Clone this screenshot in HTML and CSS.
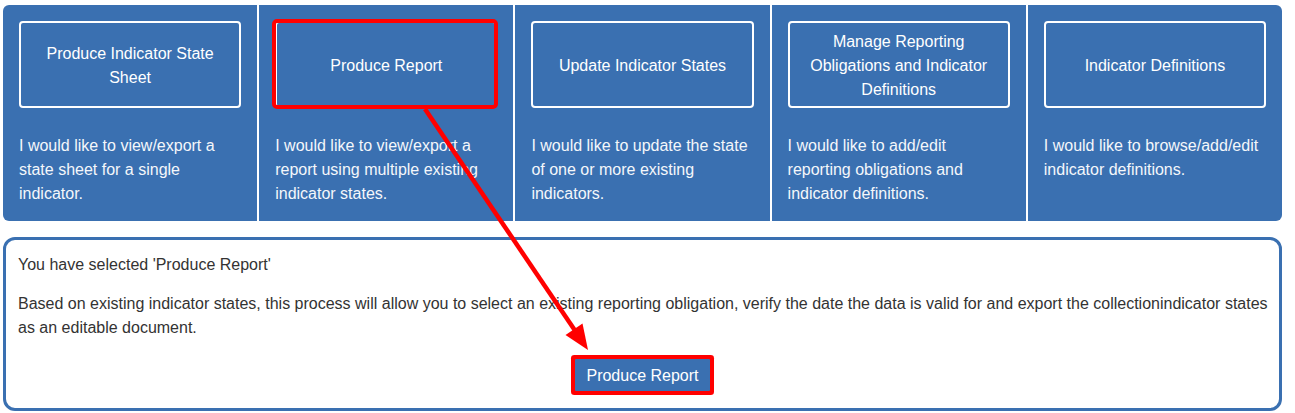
FILE: index.html
```html
<!DOCTYPE html>
<html lang="en">
<head>
<meta charset="utf-8">
<title>Processes</title>
<link rel="stylesheet" href="styles.css">
</head>
<body>
<div class="page">
  <div class="tiles">
    <div class="tile">
      <div class="tile-btn">Produce Indicator State Sheet</div>
      <p class="tile-desc">I would like to view/export a state sheet for a single indicator.</p>
    </div>
    <div class="tile">
      <div class="tile-btn">Produce Report</div>
      <p class="tile-desc">I would like to view/export a report using multiple existing indicator states.</p>
    </div>
    <div class="tile">
      <div class="tile-btn">Update Indicator States</div>
      <p class="tile-desc">I would like to update the state of one or more existing indicators.</p>
    </div>
    <div class="tile">
      <div class="tile-btn">Manage Reporting Obligations and Indicator Definitions</div>
      <p class="tile-desc">I would like to add/edit reporting obligations and indicator definitions.</p>
    </div>
    <div class="tile">
      <div class="tile-btn">Indicator Definitions</div>
      <p class="tile-desc">I would like to browse/add/edit indicator definitions.</p>
    </div>
  </div>

  <div class="selected">
    <p>You have selected 'Produce Report'</p>
    <p>Based on existing indicator states, this process will allow you to select an existing reporting obligation, verify the date the data is valid for and export the collectionindicator states as an editable document.</p>
    <div class="actions">
      <button class="primary" type="button">Produce Report</button>
    </div>
  </div>
</div>

<svg class="annotation" width="1295" height="413" viewBox="0 0 1295 413" aria-hidden="true">
  <rect x="274" y="21" width="222" height="86" rx="3" ry="3" fill="none" stroke="#ff0000" stroke-width="4"/>
  <line x1="425" y1="109" x2="576" y2="332" stroke="#ff0000" stroke-width="4.5"/>
  <polygon points="588,350 565.5,335 582.5,323.5" fill="#ff0000"/>
</svg>
</body>
</html>
```

FILE: styles.css
```css
html, body {
  margin: 0;
  padding: 0;
  background: #ffffff;
}

body {
  font-family: "Liberation Sans", Arial, sans-serif;
  font-size: 16px;
  line-height: 24px;
  color: #333333;
  position: relative;
  width: 1295px;
  height: 413px;
  overflow: hidden;
}

.page {
  padding: 5px 13px 0 3px;
  display: flex;
  flex-direction: column;
  gap: 17px;
}

.tiles {
  display: grid;
  grid-template-columns: repeat(5, 1fr);
  column-gap: 2px;
  height: 215px;
}

.tile {
  background: #3a70b1;
  padding: 16px 16px 15px 16px;
  color: #ffffff;
  min-width: 0;
}

.tile:first-child {
  border-radius: 6px 0 0 6px;
}

.tile:last-child {
  border-radius: 0 6px 6px 0;
}

.tile-btn {
  height: 87px;
  box-sizing: border-box;
  border: 2px solid #ffffff;
  border-radius: 4px;
  display: flex;
  align-items: center;
  justify-content: center;
  text-align: center;
  padding: 2px 12px 0 12px;
  color: #ffffff;
}

.tile-desc {
  margin: 26px 0 0 0;
  color: #f4f7fb;
}

.selected {
  border: 3px solid #3a70b1;
  border-radius: 12px;
  padding: 13px 6px 17px 12px;
  height: 174px;
  box-sizing: border-box;
}

.selected p {
  margin: 0 0 15px 0;
}

.actions {
  display: flex;
  justify-content: center;
  padding-top: 4px;
  padding-right: 6px;
}

.primary {
  font-family: "Liberation Sans", Arial, sans-serif;
  font-size: 16px;
  line-height: 24px;
  color: #ffffff;
  background: #3a70b1;
  border: none;
  border-radius: 1px;
  padding: 5px 11px 3px 11px;
  height: 32px;
  white-space: nowrap;
  box-shadow: 0 0 0 4px #ff0000;
  cursor: pointer;
}

.annotation {
  position: absolute;
  top: 0;
  left: 0;
  pointer-events: none;
}
```
